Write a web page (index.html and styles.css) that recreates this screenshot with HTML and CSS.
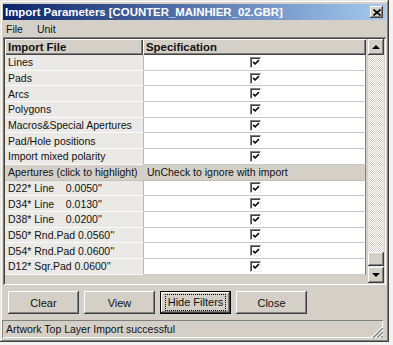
FILE: index.html
```html
<!DOCTYPE html>
<html>
<head>
<meta charset="utf-8">
<link rel="stylesheet" href="styles.css">
</head>
<body>
<div class="window">
  <div class="titlebar">
    <span class="title">Import Parameters [COUNTER_MAINHIER_02.GBR]</span>
    <span class="closebtn"><svg width="8" height="7" viewBox="0 0 8 7"><path d="M0.5 0.5 L7.5 6.5 M7.5 0.5 L0.5 6.5" stroke="#000" stroke-width="1.6"/></svg></span>
  </div>
  <div class="menubar"><span>File</span><span>Unit</span></div>
  <div class="grid">
    <div class="table">
      <div class="row head"><div class="c1">Import File</div><div class="c2">Specification</div></div>
      <div class="row"><div class="c1">Lines</div><div class="c2"><span class="cb"><svg width="9" height="9" viewBox="0 0 9 9"><path d="M1.3 3.8 L3.5 6.2 L7.8 1.8" fill="none" stroke="#000" stroke-width="1.7"/></svg></span></div></div>
      <div class="row"><div class="c1">Pads</div><div class="c2"><span class="cb"><svg width="9" height="9" viewBox="0 0 9 9"><path d="M1.3 3.8 L3.5 6.2 L7.8 1.8" fill="none" stroke="#000" stroke-width="1.7"/></svg></span></div></div>
      <div class="row"><div class="c1">Arcs</div><div class="c2"><span class="cb"><svg width="9" height="9" viewBox="0 0 9 9"><path d="M1.3 3.8 L3.5 6.2 L7.8 1.8" fill="none" stroke="#000" stroke-width="1.7"/></svg></span></div></div>
      <div class="row"><div class="c1">Polygons</div><div class="c2"><span class="cb"><svg width="9" height="9" viewBox="0 0 9 9"><path d="M1.3 3.8 L3.5 6.2 L7.8 1.8" fill="none" stroke="#000" stroke-width="1.7"/></svg></span></div></div>
      <div class="row"><div class="c1">Macros&amp;Special Apertures</div><div class="c2"><span class="cb"><svg width="9" height="9" viewBox="0 0 9 9"><path d="M1.3 3.8 L3.5 6.2 L7.8 1.8" fill="none" stroke="#000" stroke-width="1.7"/></svg></span></div></div>
      <div class="row"><div class="c1">Pad/Hole positions</div><div class="c2"><span class="cb"><svg width="9" height="9" viewBox="0 0 9 9"><path d="M1.3 3.8 L3.5 6.2 L7.8 1.8" fill="none" stroke="#000" stroke-width="1.7"/></svg></span></div></div>
      <div class="row"><div class="c1">Import mixed polarity</div><div class="c2"><span class="cb"><svg width="9" height="9" viewBox="0 0 9 9"><path d="M1.3 3.8 L3.5 6.2 L7.8 1.8" fill="none" stroke="#000" stroke-width="1.7"/></svg></span></div></div>
      <div class="row sect"><div class="c1">Apertures (click to highlight)</div><div class="c2">UnCheck to ignore with import</div></div>
      <div class="row"><div class="c1">D22* Line&nbsp;&nbsp;&nbsp; 0.0050''</div><div class="c2"><span class="cb"><svg width="9" height="9" viewBox="0 0 9 9"><path d="M1.3 3.8 L3.5 6.2 L7.8 1.8" fill="none" stroke="#000" stroke-width="1.7"/></svg></span></div></div>
      <div class="row"><div class="c1">D34* Line&nbsp;&nbsp;&nbsp; 0.0130''</div><div class="c2"><span class="cb"><svg width="9" height="9" viewBox="0 0 9 9"><path d="M1.3 3.8 L3.5 6.2 L7.8 1.8" fill="none" stroke="#000" stroke-width="1.7"/></svg></span></div></div>
      <div class="row"><div class="c1">D38* Line&nbsp;&nbsp;&nbsp; 0.0200''</div><div class="c2"><span class="cb"><svg width="9" height="9" viewBox="0 0 9 9"><path d="M1.3 3.8 L3.5 6.2 L7.8 1.8" fill="none" stroke="#000" stroke-width="1.7"/></svg></span></div></div>
      <div class="row"><div class="c1">D50* Rnd.Pad 0.0560''</div><div class="c2"><span class="cb"><svg width="9" height="9" viewBox="0 0 9 9"><path d="M1.3 3.8 L3.5 6.2 L7.8 1.8" fill="none" stroke="#000" stroke-width="1.7"/></svg></span></div></div>
      <div class="row"><div class="c1">D54* Rnd.Pad 0.0600''</div><div class="c2"><span class="cb"><svg width="9" height="9" viewBox="0 0 9 9"><path d="M1.3 3.8 L3.5 6.2 L7.8 1.8" fill="none" stroke="#000" stroke-width="1.7"/></svg></span></div></div>
      <div class="row"><div class="c1">D12* Sqr.Pad 0.0600''</div><div class="c2"><span class="cb"><svg width="9" height="9" viewBox="0 0 9 9"><path d="M1.3 3.8 L3.5 6.2 L7.8 1.8" fill="none" stroke="#000" stroke-width="1.7"/></svg></span></div></div>
    </div>
    <div class="scrollbar">
      <div class="sbtn"><span class="arr up"></span></div>
      <div class="track"><div class="thumb"></div></div>
      <div class="sbtn"><span class="arr down"></span></div>
    </div>
  </div>
  <div class="buttons">
    <button class="btn">Clear</button>
    <button class="btn">View</button>
    <button class="btn default"><span class="focus">Hide Filters</span></button>
    <button class="btn">Close</button>
  </div>
  <div class="status">
    <span>Artwork Top Layer Import successful</span>
    <svg class="grip" width="12" height="12" viewBox="0 0 12 12">
      <path d="M11 1 L1 11 M11 5 L5 11 M11 9 L9 11" stroke="#fff" stroke-width="1"/>
      <path d="M12 2 L2 12 M12 6 L6 12 M12 10 L10 12" stroke="#808080" stroke-width="1.2"/>
    </svg>
  </div>
</div>
</body>
</html>
```

FILE: styles.css
```css
* { box-sizing: border-box; }
body {
  margin: 0;
  background: #f3f3f3;
  font-family: "Liberation Sans", Arial, sans-serif;
  font-size: 10.5px;
  color: #111;
}
.window {
  width: 389px;
  height: 342px;
  background: #d4d0c8;
  padding: 3px;
  display: flex;
  flex-direction: column;
  box-shadow: inset -1px -1px #404040, inset 1px 1px #e8e6e0, inset -2px -2px #808080, inset 2px 2px #fff;
}
.titlebar {
  height: 16px;
  margin-top: 1px;
  background: linear-gradient(to right, #0a246a, #a6caf0);
  display: flex;
  align-items: center;
  justify-content: space-between;
  padding: 0 3px 0 2px;
}
.title {
  color: #fff;
  font-weight: bold;
  font-size: 11.4px;
}
.closebtn {
  width: 13px;
  height: 12px;
  background: #d4d0c8;
  display: flex;
  align-items: center;
  justify-content: center;
  box-shadow: inset -1px -1px #404040, inset 1px 1px #fff, inset -2px -2px #808080;
}
.menubar {
  height: 17px;
  display: flex;
  align-items: center;
  gap: 14px;
  padding-left: 3px;
}
.grid {
  height: 248px;
  display: flex;
  padding: 2px;
  box-shadow: inset 1px 1px #808080, inset -1px -1px #fff, inset 2px 2px #404040, inset -2px -2px #d4d0c8;
}
.table {
  flex: 1;
  display: flex;
  flex-direction: column;
}
.row {
  display: grid;
  grid-template-columns: 138px 223px;
  height: 15.7px;
}
.row .c1 {
  background: #eae9e5;
  border-bottom: 1px solid #fbfbfb;
  padding-left: 3px;
  display: flex;
  align-items: center;
  white-space: nowrap;
  overflow: hidden;
}
.row .c2 {
  background: #fff;
  border-bottom: 1px solid #c8c8c8;
  border-left: 1px solid #b8b8b8;
  border-right: 1px solid #808080;
  display: flex;
  align-items: center;
  justify-content: center;
}
.row.head { height: 16px; }
.row.head .c1, .row.head .c2 {
  background: #d4d0c8;
  font-weight: bold;
  font-size: 11.4px;
  justify-content: flex-start;
  padding-left: 3px;
  border: none;
  box-shadow: inset 1px 1px #fff, inset -1px -1px #404040, inset -2px -2px #808080;
}
.row.sect .c1, .row.sect .c2 {
  background: #d4d0c8;
  justify-content: flex-start;
  padding-left: 3px;
  border-bottom: 1px solid #c4c0b8;
}
.row.sect .c2 { border-left: none; padding-left: 4px; }
.cb {
  width: 11px;
  height: 11px;
  background: #fff;
  border: 1px solid;
  border-color: #808080 #f0f0f0 #f0f0f0 #808080;
  box-shadow: inset 1px 1px #404040;
  display: flex;
  align-items: center;
  justify-content: center;
  margin-left: 1px;
}
.cb svg { margin: 1px 0 0 1px; }
.scrollbar {
  width: 16px;
  display: flex;
  flex-direction: column;
  margin-left: 1px;
}
.sbtn, .thumb {
  background: #d4d0c8;
  box-shadow: inset -1px -1px #404040, inset 1px 1px #fff, inset -2px -2px #808080;
}
.sbtn {
  height: 16px;
  display: flex;
  align-items: center;
  justify-content: center;
}
.track {
  flex: 1;
  display: flex;
  flex-direction: column;
  justify-content: flex-end;
  background: repeating-conic-gradient(#fff 0 25%, #d4d0c8 0 50%) 0 0 / 2px 2px;
}
.thumb { height: 14px; margin-bottom: 1px; }
.arr {
  width: 0;
  height: 0;
  border-left: 4px solid transparent;
  border-right: 4px solid transparent;
}
.arr.up { border-bottom: 4px solid #000; }
.arr.down { border-top: 4px solid #000; }
.buttons {
  display: flex;
  gap: 5px;
  padding-left: 5px;
  margin-top: 6px;
}
.btn {
  width: 71px;
  height: 23px;
  background: #d4d0c8;
  border: none;
  padding: 0;
  font-family: "Liberation Sans", Arial, sans-serif;
  font-size: 11px;
  color: #111;
  box-shadow: inset -1px -1px #404040, inset 1px 1px #fff, inset -2px -2px #808080;
}
.btn.default {
  box-shadow: inset 0 0 0 1px #000, inset -2px -2px #404040, inset 2px 2px #fff, inset -3px -3px #808080;
  display: flex;
  align-items: center;
  justify-content: center;
}
.focus {
  border: 1px dotted #000;
  padding: 2px 2px;
  line-height: 11px;
}
.status {
  margin-top: 6px;
  height: 18px;
  width: 381px;
  margin-left: -1px;
  display: flex;
  align-items: center;
  justify-content: space-between;
  padding-left: 4px;
  box-shadow: inset 1px 1px #808080, inset -1px -1px #fff;
}
.grip { align-self: flex-end; margin-bottom: 0; }
```
